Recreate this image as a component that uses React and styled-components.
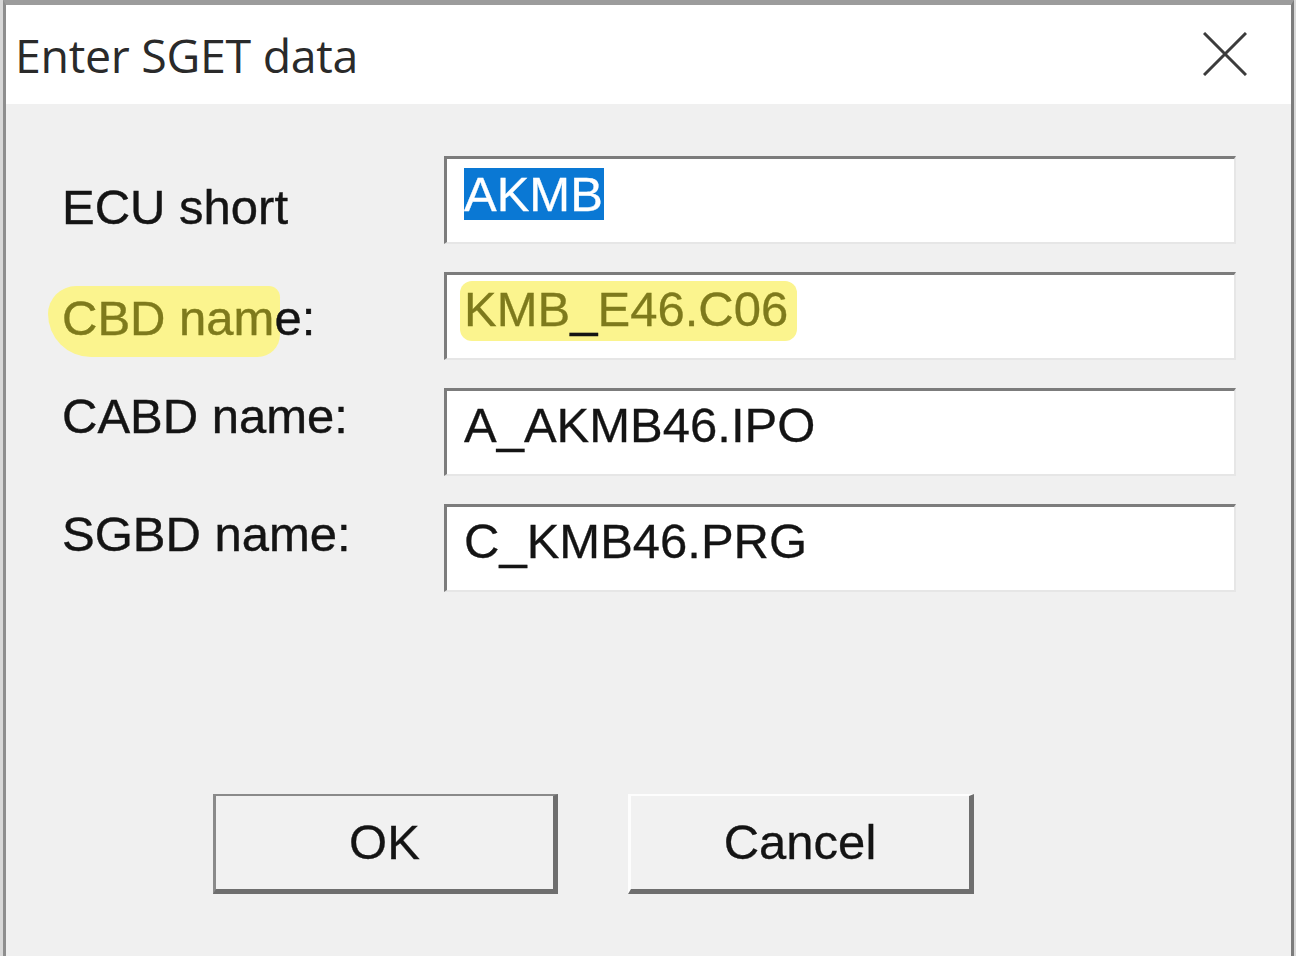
import React from 'react';
import styled, { createGlobalStyle } from 'styled-components';

const GlobalStyle = createGlobalStyle`
  html, body {
    margin: 0;
    padding: 0;
    background: #d4d4d4;
  }
  * {
    box-sizing: border-box;
  }
`;

const fields = [
  { label: 'ECU short', value: 'AKMB', offset: 23, selected: true },
  { label: 'CBD name:', value: 'KMB_E46.C06', offset: 18, marked: true },
  { label: 'CABD name:', value: 'A_AKMB46.IPO', offset: 0 },
  { label: 'SGBD name:', value: 'C_KMB46.PRG', offset: 2 },
];

const CloseIcon = () => (
  <svg width="44" height="44" viewBox="0 0 44 44">
    <path d="M1 1 L43 43 M43 1 L1 43" stroke="#3c3c3c" strokeWidth="3" fill="none" />
  </svg>
);

const LabelText = ({ field }) => {
  if (field.marked) {
    return (
      <>
        <LabelMark>CBD nam</LabelMark>e:
      </>
    );
  }
  return field.label;
};

const ValueText = ({ field }) => {
  if (field.selected) return <Selection>{field.value}</Selection>;
  if (field.marked) {
    return (
      <ValueMark>
        KMB<Dark>_</Dark>E46.C06
      </ValueMark>
    );
  }
  return field.value;
};

export default function App() {
  return (
    <>
      <GlobalStyle />
      <Screen>
        <Window>
          <TitleBar>
            <Title>Enter SGET data</Title>
            <CloseButton>
              <CloseIcon />
            </CloseButton>
          </TitleBar>
          <Body>
            <Form>
              {fields.map((field) => (
                <React.Fragment key={field.label}>
                  <Label offset={field.offset}>
                    <LabelText field={field} />
                  </Label>
                  <TextBox>
                    <ValueText field={field} />
                  </TextBox>
                </React.Fragment>
              ))}
            </Form>
            <ButtonRow>
              <Button isDefault>OK</Button>
              <Button>Cancel</Button>
            </ButtonRow>
          </Body>
        </Window>
      </Screen>
    </>
  );
}

const Screen = styled.div`
  width: 1296px;
  height: 956px;
  padding-left: 3px;
  padding-right: 2px;
  background: #d8d8d8;
  overflow: hidden;
`;

const Window = styled.div`
  width: 100%;
  height: 100%;
  display: flex;
  flex-direction: column;
  border-top: 5px solid #9c9c9c;
  border-left: 3px solid #8e8e8e;
  border-right: 3px solid #7c7c7c;
  background: #f0f0f0;
  font-family: "Liberation Sans", Arial, sans-serif;
`;

const TitleBar = styled.div`
  height: 99px;
  flex: none;
  display: flex;
  align-items: center;
  justify-content: space-between;
  padding: 0 44px 0 9px;
  background: #ffffff;
`;

const Title = styled.div`
  font-family: "Open Sans", "Noto Sans", sans-serif;
  font-size: 46.5px;
  font-weight: 400;
  color: #2a2a2a;
  letter-spacing: -0.3px;
`;

const CloseButton = styled.div`
  display: flex;
  margin-top: -2px;
`;

const Body = styled.div`
  flex: 1;
  padding: 52px 51px 0 56px;
  display: flex;
  flex-direction: column;
`;

const Form = styled.div`
  display: grid;
  grid-template-columns: 382px 792px;
  grid-auto-rows: 88px;
  row-gap: 28px;
`;

const Label = styled.div`
  font-size: 49px;
  line-height: 57px;
  color: #141414;
  -webkit-text-stroke: 0.4px #141414;
  margin-top: ${(props) => props.offset}px;
  white-space: nowrap;
`;

const LabelMark = styled.span`
  color: #7e7a1c;
  -webkit-text-stroke: 0.4px #7e7a1c;
  background: #fbf48e;
  padding: 5px 6px 12px 14px;
  margin-left: -14px;
  margin-right: -6px;
  border-radius: 30px 12px 24px 46px;
`;

const TextBox = styled.div`
  background: #ffffff;
  border-top: 3px solid #7c7c7c;
  border-left: 3px solid #7c7c7c;
  border-right: 2px solid #e6e6e6;
  border-bottom: 2px solid #e6e6e6;
  padding: 6px 0 0 17px;
  font-size: 49px;
  line-height: 56px;
  color: #141414;
  -webkit-text-stroke: 0.3px #141414;
  white-space: nowrap;
`;

const Selection = styled.span`
  display: inline-block;
  background: #0a78d4;
  color: #ffffff;
  -webkit-text-stroke: 0.3px #ffffff;
  line-height: 52px;
  margin-top: 3px;
  padding: 0 1px 0 0;
`;

const ValueMark = styled.span`
  color: #7e7a1c;
  -webkit-text-stroke: 0.3px #7e7a1c;
  background: #fbf48e;
  padding: 1px 9px 5px 4px;
  margin-left: -4px;
  border-radius: 12px;
`;

const Dark = styled.span`
  color: #141414;
  -webkit-text-stroke: 0.3px #141414;
`;

const ButtonRow = styled.div`
  display: flex;
  gap: 70px;
  margin-top: 202px;
  margin-left: 151px;
`;

const Button = styled.div`
  width: ${(props) => (props.isDefault ? '345px' : '346px')};
  height: 100px;
  display: flex;
  align-items: center;
  justify-content: center;
  background: #f1f1f1;
  border-top: 2px solid ${(props) => (props.isDefault ? '#8a8a8a' : '#fdfdfd')};
  border-left: 3px solid ${(props) => (props.isDefault ? '#8a8a8a' : '#fdfdfd')};
  border-right: 5px solid #6e6e6e;
  border-bottom: 5px solid #6e6e6e;
  font-size: 49px;
  color: #141414;
  -webkit-text-stroke: 0.3px #141414;
  padding-bottom: 2px;
`;
